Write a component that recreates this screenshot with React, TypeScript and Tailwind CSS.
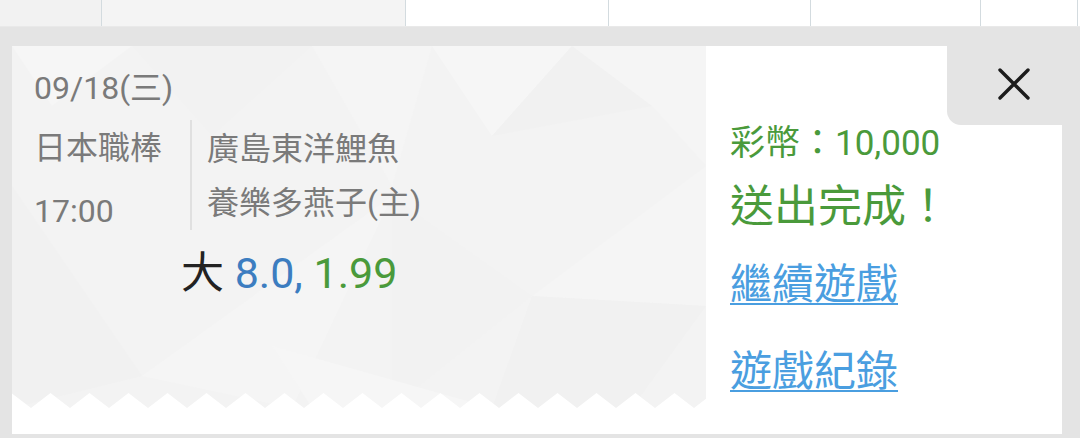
import React from "react";

const font = { fontFamily: 'Roboto, "Noto Sans CJK TC", sans-serif' };

// faint low-poly facets behind the ticket
const facets = [
  { p: "0,0 120,0 40,60", f: "#f6f6f6" },
  { p: "120,0 300,0 200,90", f: "#f2f2f2" },
  { p: "300,0 420,0 380,140", f: "#f5f5f5" },
  { p: "420,0 560,0 480,90", f: "#f6f6f6" },
  { p: "480,90 560,0 640,60", f: "#f1f1f1" },
  { p: "560,0 694,0 694,120 640,60", f: "#f5f5f5" },
  { p: "0,140 130,330 0,362", f: "#f1f1f1" },
  { p: "130,330 380,150 280,362", f: "#f5f5f5" },
  { p: "380,150 520,250 380,362", f: "#f2f2f2" },
  { p: "520,250 694,120 694,260", f: "#f5f5f5" },
  { p: "520,250 694,260 620,362 480,362", f: "#f1f1f1" },
  { p: "260,300 480,362 300,362", f: "#f6f6f6" },
];

function zigzag() {
  const pts: string[] = [];
  let x = -0.5;
  let up = true;
  while (x < 720) {
    pts.push(`${x},${up ? 0 : 15}`);
    x += 19.5;
    up = !up;
  }
  pts.push("694,15", "0,15");
  return pts.join(" ");
}

const cells = [
  { w: "w-[102px]", bg: "bg-[#f2f2f2]" },
  { w: "w-[304px]", bg: "bg-[#f4f4f4]" },
  { w: "w-[203px]", bg: "bg-white" },
  { w: "w-[202px]", bg: "bg-white" },
  { w: "w-[170px]", bg: "bg-white" },
  { w: "w-[97px]", bg: "bg-white" },
];

export default function App() {
  return (
    <div className="relative w-[1080px] h-[438px] bg-[#e4e4e4] overflow-hidden" style={font}>
      {/* table row peeking above */}
      <div className="flex h-[27px] border-b border-[#e9e9e9]">
        {cells.map((c, i) => (
          <div key={i} className={`${c.w} ${c.bg} h-full border-r border-[#d3dbdf]`} />
        ))}
        <div className="flex-1 bg-white" />
      </div>

      {/* ticket */}
      <div className="ml-[12px] mt-[19px] w-[1050px] h-[388px] bg-white flex flex-col">
        <div className="flex h-[362px]">
          <div className="relative w-[694px] h-full bg-[#f3f3f3] overflow-hidden">
            <svg className="absolute inset-0" width="694" height="362">
              {facets.map((f, i) => (
                <polygon key={i} points={f.p} fill={f.f} />
              ))}
            </svg>
            <svg className="absolute left-0 bottom-0" width="694" height="15">
              <polygon points={zigzag()} fill="#ffffff" />
            </svg>

            <div className="relative pl-[22px] pt-[22px] text-[#7a7a7a]">
              <div className="text-[32px] leading-[40px]">09/18(三)</div>
              <div className="flex mt-[12px]">
                <div className="w-[156px] text-[32px]">
                  <div className="h-[56px] leading-[56px]">日本職棒</div>
                  <div className="mt-[16px] leading-[38px]">17:00</div>
                </div>
                <div className="h-[110px] border-l-2 border-[#e0e0e0] pl-[15px] pt-[2px] text-[32px]">
                  <div className="leading-[54px]">廣島東洋鯉魚</div>
                  <div className="leading-[54px]">養樂多燕子(主)</div>
                </div>
              </div>
              <div className="mt-[18px] ml-[147px] text-[43px] leading-[50px]">
                <span className="text-[#222222]">大</span>{" "}
                <span className="text-[#3c7dc0]">8.0,</span>{" "}
                <span className="text-[#4a9a3b]">1.99</span>
              </div>
            </div>
          </div>

          <div className="flex-1 pl-[24px] pt-[78px]">
            <div className="text-[35px] leading-[40px] text-[#4a9a3b]">彩幣：10,000</div>
            <div className="mt-[18px] text-[44px] leading-[50px] text-[#4a9a3b]">送出完成！</div>
            <div className="mt-[28px] text-[42px] leading-[50px]">
              <a className="text-[#4a9ee0] underline decoration-2 underline-offset-[4px]">繼續遊戲</a>
            </div>
            <div className="mt-[37px] text-[42px] leading-[50px]">
              <a className="text-[#4a9ee0] underline decoration-2 underline-offset-[4px]">遊戲紀錄</a>
            </div>
          </div>
        </div>
        <div className="h-[26px]" />
      </div>

      {/* close tab */}
      <div className="absolute top-[46px] left-[947px] w-[133px] h-[79px] bg-[#e4e4e4] rounded-bl-[14px] flex items-center justify-center pb-[3px]">
        <svg width="32" height="32" viewBox="0 0 32 32">
          <path d="M2 2 L30 30 M30 2 L2 30" stroke="#1c1c1c" strokeWidth="3.4" strokeLinecap="round" />
        </svg>
      </div>
    </div>
  );
}
